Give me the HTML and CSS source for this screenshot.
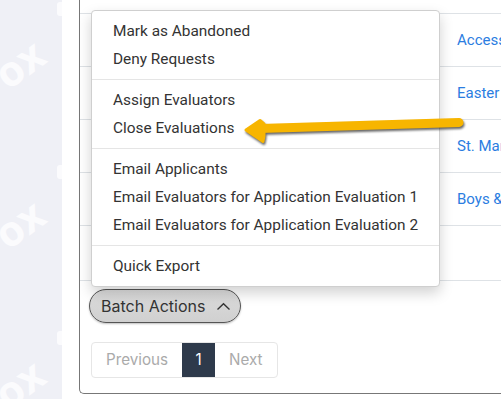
FILE: index.html
```html
<!DOCTYPE html>
<html>
<head>
	<title>Applications</title>
	<link rel="stylesheet" href="styles.css">
</head>
<body>
<div class="page">
	<aside class="side">
		<span class="mark m1">ox</span>
		<span class="mark m2">ox</span>
		<span class="mark m3">ox</span>
		<span class="blob b1"></span>
		<span class="blob b2"></span>
		<span class="blob b3"></span>
	</aside>

	<main class="main">
		<div class="panel">
			<table class="apps">
				<tr><td class="pick"></td><td><a href="#">Accessible Playgrounds</a></td></tr>
				<tr><td class="pick"></td><td><a href="#">Easter Seals Camp</a></td></tr>
				<tr><td class="pick"></td><td><a href="#">St. Mary's Shelter</a></td></tr>
				<tr><td class="pick"></td><td><a href="#">Boys &amp; Girls Club</a></td></tr>
				<tr class="last"><td class="pick"></td><td></td></tr>
			</table>

			<div class="batch">
				<ul class="menu">
					<li>Mark as Abandoned</li>
					<li>Deny Requests</li>
					<li class="divider"></li>
					<li>Assign Evaluators</li>
					<li>Close Evaluations</li>
					<li class="divider"></li>
					<li>Email Applicants</li>
					<li>Email Evaluators for Application Evaluation 1</li>
					<li>Email Evaluators for Application Evaluation 2</li>
					<li class="divider"></li>
					<li>Quick Export</li>
				</ul>
				<button class="batch-btn">Batch Actions
					<svg width="15" height="9" viewBox="0 0 15 9"><path d="M1.5 7.5 L7.5 1.8 L13.5 7.5" fill="none" stroke="#333" stroke-width="1.4"/></svg>
				</button>
			</div>

			<ul class="pager">
				<li>Previous</li>
				<li class="active">1</li>
				<li>Next</li>
			</ul>
		</div>
	</main>

	<!-- the callout arrow pointing at "Close Evaluations" -->
	<svg class="callout" width="230" height="40" viewBox="0 0 230 40">
		<g fill="#f7b500" stroke="#f7b500" stroke-linejoin="round" stroke-linecap="round">
			<path d="M6 20 L20 10.5 L24 14 L24 26 L23 31.5 Z" stroke-width="3"/>
			<path d="M20 18.5 L219 12.5" stroke-width="9" fill="none"/>
		</g>
	</svg>
</div>
</body>
</html>
```

FILE: styles.css
```css
body {
	margin: 0;
	background: #fff;
	font-family: Roboto, "Liberation Sans", sans-serif;
	color: #333;
}

.page {
	display: flex;
	height: 399px;
	overflow: hidden;
	position: relative;
}

.side {
	width: 62px;
	flex: none;
	background: #eff0f6;
	position: relative;
	overflow: hidden;
}

/* faint watermark letters */
.mark {
	position: absolute;
	color: #fbfbfd;
	font-family: "Open Sans", sans-serif;
	font-weight: 700;
	font-size: 42px;
	line-height: 1;
	transform: rotate(-36deg);
	transform-origin: left bottom;
}
.m1 { left: 11px; top: 53px; }
.m2 { left: 11px; top: 213px; }
.m3 { left: 11px; top: 373px; }

.blob {
	position: absolute;
	left: 57px;
	width: 10px;
	height: 14px;
	border-radius: 3px;
	background: #fbfbfd;
}
.b1 { top: 2px; }
.b2 { top: 165px; }
.b3 { top: 331px; }

.main {
	flex: 1;
	padding-left: 17px;
	min-width: 0;
}

.panel {
	border: 1px solid #777;
	border-top: none;
	border-right: none;
	border-radius: 0 0 0 5px;
	width: 600px;
	padding: 13px 0 15px;
}

.apps {
	width: 100%;
	border-collapse: collapse;
	border-top: 1px solid #dee2e6;
}
.apps td {
	height: 52px;
	border-bottom: 1px solid #dee2e6;
	padding: 0;
	font-size: 15px;
}
.apps tr.last td {
	height: 54px;
}
.apps .pick {
	width: 377px;
}
.apps a {
	color: #2b7de1;
	text-decoration: none;
	white-space: nowrap;
}

.batch {
	position: relative;
	margin: 8px 0 0 9px;
}

.menu {
	position: absolute;
	left: 2px;
	bottom: 100%;
	margin: 0 0 2px;
	width: 347px;
	padding: 6px 0;
	list-style: none;
	background: #fff;
	border: 1px solid #cfcfcf;
	border-radius: 4px;
	box-shadow: 0 6px 14px rgba(0, 0, 0, 0.18);
	font-size: 15.4px;
}
.menu li {
	height: 28px;
	line-height: 28px;
	padding: 0 21px;
	white-space: nowrap;
}
.menu li.divider {
	height: 0;
	margin: 6px 0;
	border-top: 1px solid #e5e5e5;
}

.batch-btn {
	display: flex;
	align-items: center;
	gap: 11px;
	height: 34px;
	width: 152px;
	padding: 0 11px;
	white-space: nowrap;
	border: 1px solid #555;
	border-radius: 17px;
	background: linear-gradient(#dcdcdc, #d0d0d0);
	box-shadow: 0 1px 2px rgba(0, 0, 0, 0.25);
	font-family: Inter, "Noto Sans", sans-serif;
	font-size: 16px;
	color: #333;
}
.batch-btn svg {
	flex: none;
}

.pager {
	display: inline-flex;
	list-style: none;
	margin: 19px 0 0 11px;
	padding: 0;
	border: 1px solid #e6e6e6;
	border-radius: 4px;
	font-family: Inter, "Noto Sans", sans-serif;
	font-size: 15.2px;
	color: #aaa;
}
.pager li {
	height: 34px;
	line-height: 34px;
	padding: 0 14px;
}
.pager li.active {
	width: 33px;
	padding: 0;
	text-align: center;
	background: #2e3a4b;
	color: #fff;
}

.callout {
	position: absolute;
	left: 240px;
	top: 110px;
	filter: drop-shadow(1.5px 2px 1px rgba(0, 0, 0, 0.6));
}
```
